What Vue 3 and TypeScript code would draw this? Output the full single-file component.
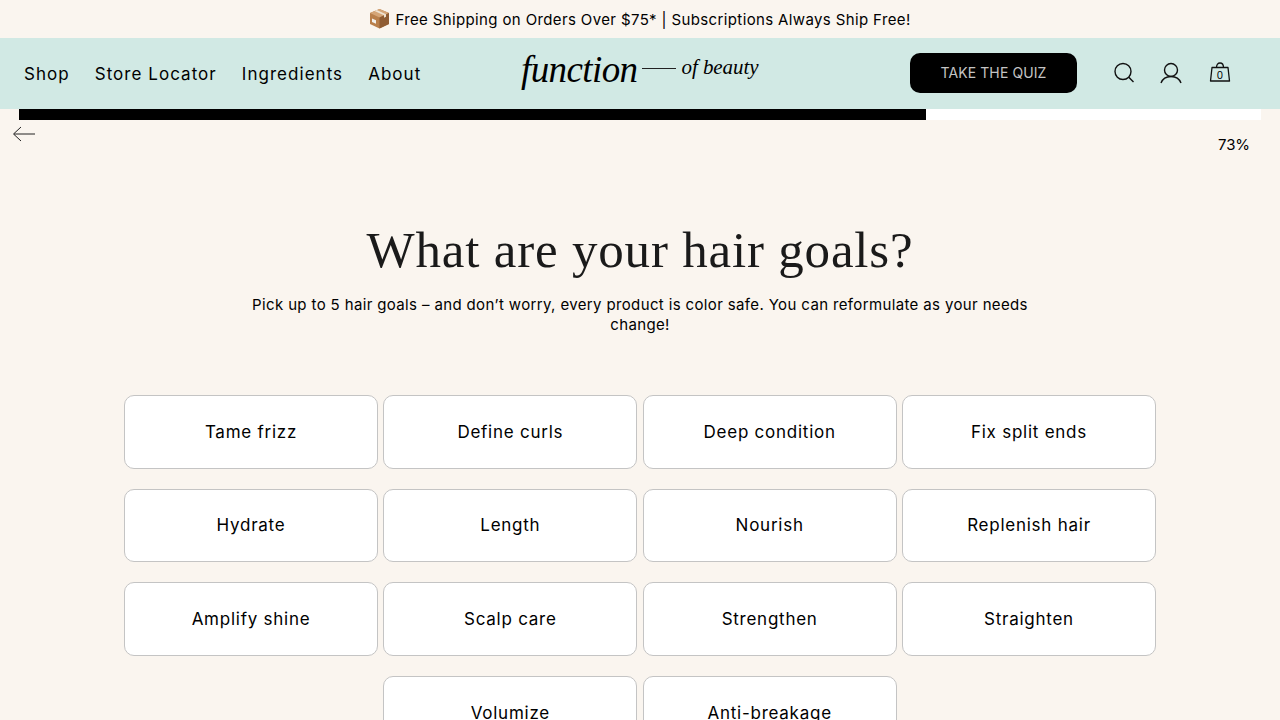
<script setup lang="ts">
const navLinks: string[] = ['Shop', 'Store Locator', 'Ingredients', 'About']
const goals: string[] = [
  'Tame frizz', 'Define curls', 'Deep condition', 'Fix split ends',
  'Hydrate', 'Length', 'Nourish', 'Replenish hair',
  'Amplify shine', 'Scalp care', 'Strengthen', 'Straighten',
  'Volumize', 'Anti-breakage',
]
const progress = 73
</script>

<template>
  <div class="page">
    <div class="announce">
      <svg class="box" width="21" height="21" viewBox="0 0 21 21" aria-hidden="true">
        <path d="M10.5 1 20 5v11l-9.5 4.5L1 16V5z" fill="#b97f4b" />
        <path d="M10.5 1 20 5l-9.5 4.5L1 5z" fill="#d5a577" />
        <path d="M10.5 9.500 20 5v11l-9.500 4.500z" fill="#8f5c33" />
        <path d="M5.500 3 15 7.300v2.500l2-1V6.200L7.700 2z" fill="#efe3d2" />
        <path d="M3 10.500l4 1.800v3.500l-4-1.800z" fill="#f2f0ec" />
      </svg>
      <span>Free Shipping on Orders Over $75* | Subscriptions Always Ship Free!</span>
    </div>

    <header class="header">
      <nav class="nav">
        <a v-for="link in navLinks" :key="link" class="nav-link">{{ link }}</a>
      </nav>
      <div class="logo">
        <span class="logo-main">function</span>
        <span class="logo-line"></span>
        <span class="logo-sub">of beauty</span>
      </div>
      <div class="actions">
        <button class="quiz">TAKE THE QUIZ</button>
        <svg class="icon search" width="22" height="22" viewBox="0 0 22 22" fill="none" stroke="#111" stroke-width="1.400">
          <circle cx="10" cy="9.500" r="8" />
          <path d="M15.800 15.200 20.500 20" />
        </svg>
        <svg class="icon user" width="22" height="22" viewBox="0 0 22 22" fill="none" stroke="#111" stroke-width="1.400">
          <circle cx="11" cy="8" r="6.500" />
          <path d="M1 21c1.500-4 5-6.500 10-6.500S19.500 17 21 21" />
        </svg>
        <span class="bag">
          <svg width="22" height="20" viewBox="0 0 22 20" fill="none" stroke="#111" stroke-width="1.300">
            <path d="M3 5.500h16l1.500 13.500h-19z" stroke-linejoin="round" />
            <path d="M7.500 5.500C7.500 2.500 9 1 11 1s3.500 1.500 3.500 4.500" />
          </svg>
          <span class="bag-count">0</span>
        </span>
      </div>
    </header>

    <div class="track">
      <div class="fill" :style="{ width: progress + '%' }"></div>
    </div>
    <div class="progress-row">
      <svg class="back" width="24" height="16" viewBox="0 0 24 16" fill="none" stroke="#222" stroke-width="1">
        <path d="M23 8H2M9 1 1.500 8 9 15" />
      </svg>
      <span class="percent">{{ progress }}%</span>
    </div>

    <main class="main">
      <h1 class="title">What are your hair goals?</h1>
      <p class="subtitle">Pick up to 5 hair goals – and don’t worry, every product is color safe. You can reformulate as your needs change!</p>
      <div class="grid">
        <button v-for="goal in goals" :key="goal" class="goal">{{ goal }}</button>
      </div>
    </main>
  </div>
</template>

<style>
html, body { margin: 0; background: #faf5ef; overflow: hidden; }
</style>

<style scoped>
.page {
  height: 720px;
  overflow: hidden;
  background: #faf5ef;
  color: #000;
  font-family: Inter, "Liberation Sans", sans-serif;
}
.announce {
  height: 38px;
  display: flex;
  align-items: center;
  justify-content: center;
  gap: 5px;
  font-size: 15px;
  letter-spacing: 0.370px;
}
.box { flex: none; margin-top: -1px; }
.header {
  height: 71px;
  background: #d1e9e4;
  position: relative;
  display: flex;
  align-items: center;
  justify-content: space-between;
  padding-left: 24px;
}
.nav { display: flex; gap: 25px; }
.nav-link {
  font-size: 17px;
  letter-spacing: 1.040px;
  color: #000;
}
.logo {
  position: absolute;
  left: 521px;
  top: 7px;
  display: flex;
  align-items: center;
  font-family: "Liberation Serif", serif;
  font-style: italic;
  color: #000;
  white-space: nowrap;
}
.logo-main { font-size: 37px; line-height: 50px; letter-spacing: -0.600px; }
.logo-line { width: 34px; height: 1px; background: #222; margin: 0 5px 4px 5px; }
.logo-sub { font-size: 21px; margin-bottom: 6px; letter-spacing: -0.050px; }
.actions {
  display: flex;
  align-items: center;
  padding-right: 49px;
  margin-top: -2px;
}
.quiz {
  width: 167px;
  height: 40px;
  border: 0;
  border-radius: 10px;
  background: #000;
  color: #c4c4c4;
  font-family: inherit;
  font-size: 14px;
  letter-spacing: 0.100px;
  margin-right: 36px;
}
.search { margin-right: 25px; }
.user { margin-right: 27px; }
.bag { position: relative; display: block; width: 22px; height: 20px; margin-top: -2px; }
.bag-count {
  position: absolute;
  left: 0;
  right: 0;
  top: 7px;
  text-align: center;
  font-size: 10px;
  line-height: 12px;
}
.track {
  height: 11px;
  margin: 0 19px;
  background: #fff;
}
.fill { height: 100%; background: #000; }
.progress-row {
  display: flex;
  align-items: flex-start;
  justify-content: space-between;
  height: 52px;
  padding: 6px 31px 0 12px;
  box-sizing: border-box;
}
.back { display: block; }
.percent { font-size: 15px; line-height: 20px; margin-top: 9px; letter-spacing: -0.100px; position: relative; left: 1px; }
.main {
  display: flex;
  flex-direction: column;
  align-items: center;
}
.title {
  margin: 46px 0 0;
  font-family: "Liberation Serif", serif;
  font-weight: 400;
  font-size: 51px;
  line-height: 64px;
  letter-spacing: 0.800px;
  color: #1a1a1a;
}
.subtitle {
  width: 800px;
  margin: 13px 0 0;
  text-align: center;
  font-size: 15px;
  line-height: 20px;
  letter-spacing: 0.365px;
}
.grid {
  width: 1032px;
  margin-top: 60px;
  display: flex;
  flex-wrap: wrap;
  justify-content: center;
  column-gap: 5.330px;
  row-gap: 20px;
}
.goal {
  width: 254px;
  height: 73.600px;
  box-sizing: border-box;
  background: #fff;
  border: 1px solid #c4c4c4;
  border-radius: 10px;
  font-family: Inter, "Liberation Sans", sans-serif;
  font-size: 17px;
  letter-spacing: 0.750px;
  color: #000;
  padding: 0;
}
</style>
